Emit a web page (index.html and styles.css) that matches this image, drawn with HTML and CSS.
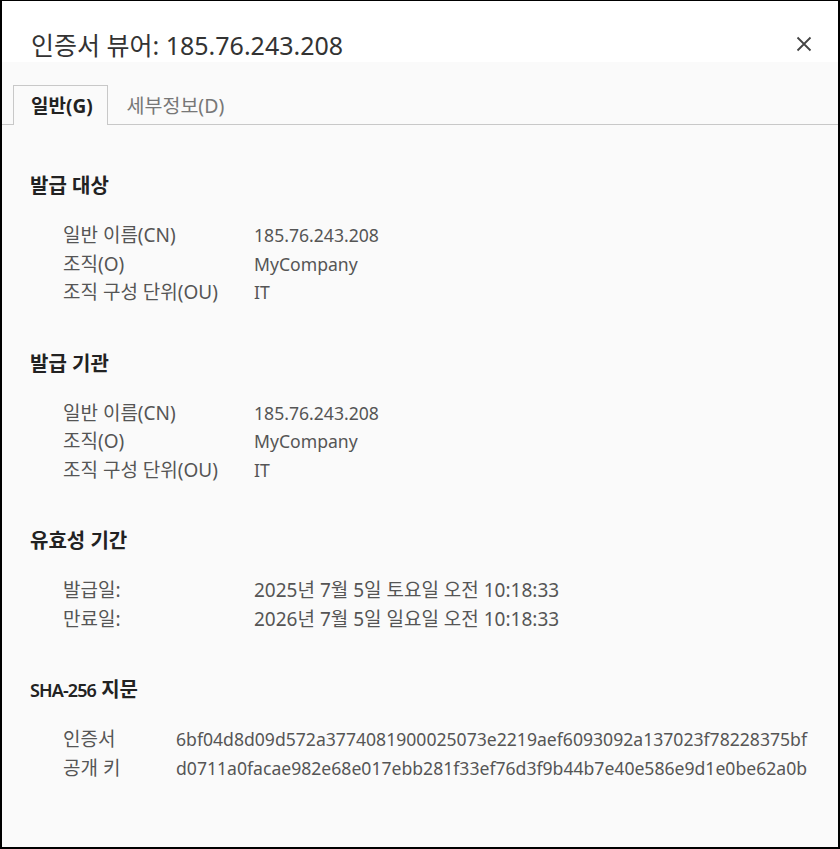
FILE: index.html
```html
<!DOCTYPE html>
<html lang="ko">
<head>
    <meta charset="UTF-8">
    <meta name="viewport" content="width=device-width, initial-scale=1.0">
    <title>인증서 뷰어</title>
    <link rel="stylesheet" href="styles.css">
</head>
<body>

    <div class="dialog">
        <div class="titlebar">
            <span class="title">인증서 뷰어: 185.76.243.208</span>
            <svg class="close" width="16" height="16" viewBox="0 0 16 16">
                <path d="M1.5 1.5 L14.5 14.5 M14.5 1.5 L1.5 14.5" stroke="#444" stroke-width="1.8" fill="none"/>
            </svg>
        </div>

        <div class="tabs">
            <div class="tab active">일반(G)</div>
            <div class="tab">세부정보(D)</div>
        </div>

        <div class="content">
            <div class="section">
                <h3>발급 대상</h3>
                <div class="rows">
                    <span class="key">일반 이름(CN)</span><span class="val">185.76.243.208</span>
                    <span class="key">조직(O)</span><span class="val">MyCompany</span>
                    <span class="key">조직 구성 단위(OU)</span><span class="val">IT</span>
                </div>
            </div>

            <div class="section">
                <h3>발급 기관</h3>
                <div class="rows">
                    <span class="key">일반 이름(CN)</span><span class="val">185.76.243.208</span>
                    <span class="key">조직(O)</span><span class="val">MyCompany</span>
                    <span class="key">조직 구성 단위(OU)</span><span class="val">IT</span>
                </div>
            </div>

            <div class="section">
                <h3>유효성 기간</h3>
                <div class="rows">
                    <span class="key">발급일:</span><span class="val date">2025년 7월 5일 토요일 오전 10:18:33</span>
                    <span class="key">만료일:</span><span class="val date">2026년 7월 5일 일요일 오전 10:18:33</span>
                </div>
            </div>

            <div class="section">
                <h3><span class="latin">SHA-256</span> 지문</h3>
                <div class="rows narrow">
                    <span class="key">인증서</span><span class="val">6bf04d8d09d572a3774081900025073e2219aef6093092a137023f78228375bf</span>
                    <span class="key">공개 키</span><span class="val">d0711a0facae982e68e017ebb281f33ef76d3f9b44b7e40e586e9d1e0be62a0b</span>
                </div>
            </div>
        </div>
    </div>

</body>
</html>
```

FILE: styles.css
```css
body {
    margin: 0;
    font-family: "Noto Sans", "Noto Sans CJK KR", sans-serif;
    color: #333;
}

.dialog {
    height: 100vh;
    box-sizing: border-box;
    border: 2px solid #000;
    border-top-width: 1px;
    background-color: #fafafa;
    overflow: hidden;
}

.titlebar {
    height: 61px;
    background-color: #fff;
    display: flex;
    align-items: center;
    justify-content: space-between;
    padding: 25px 26px 0 29px;
    box-sizing: border-box;
}

.title {
    font-size: 25px;
    color: #333;
}

.tabs {
    display: flex;
    padding: 23px 0 0 11px;
    border-bottom: 1px solid #c8c8c8;
}

.tab {
    height: 39px;
    line-height: 41px;
    padding: 0 18px 0 19px;
    font-size: 19.5px;
    color: #777;
    box-sizing: border-box;
}

.tab.active {
    border: 1px solid #c8c8c8;
    border-bottom: none;
    margin-bottom: -1px;
    height: 40px;
    background-color: #fafafa;
    color: #222;
    font-weight: bold;
    font-size: 19px;
    padding: 0 14px 0 17px;
}

.content {
    padding: 47px 0 0 28px;
}

.section {
    margin-bottom: 43px;
}

.section h3 {
    margin: 0 0 21px 0;
    font-size: 20px;
    line-height: 28px;
    font-weight: 600;
    color: #222;
}

.section h3 .latin {
    font-size: 18px;
    letter-spacing: -0.9px;
}

.rows {
    display: grid;
    grid-template-columns: 191px auto;
    align-items: baseline;
    padding-left: 33px;
    line-height: 28.5px;
    color: #555;
}

.rows.narrow {
    grid-template-columns: 113px auto;
}

.key {
    font-size: 19px;
}

.val {
    font-size: 17.6px;
}

.val.date {
    font-size: 19px;
}
```
